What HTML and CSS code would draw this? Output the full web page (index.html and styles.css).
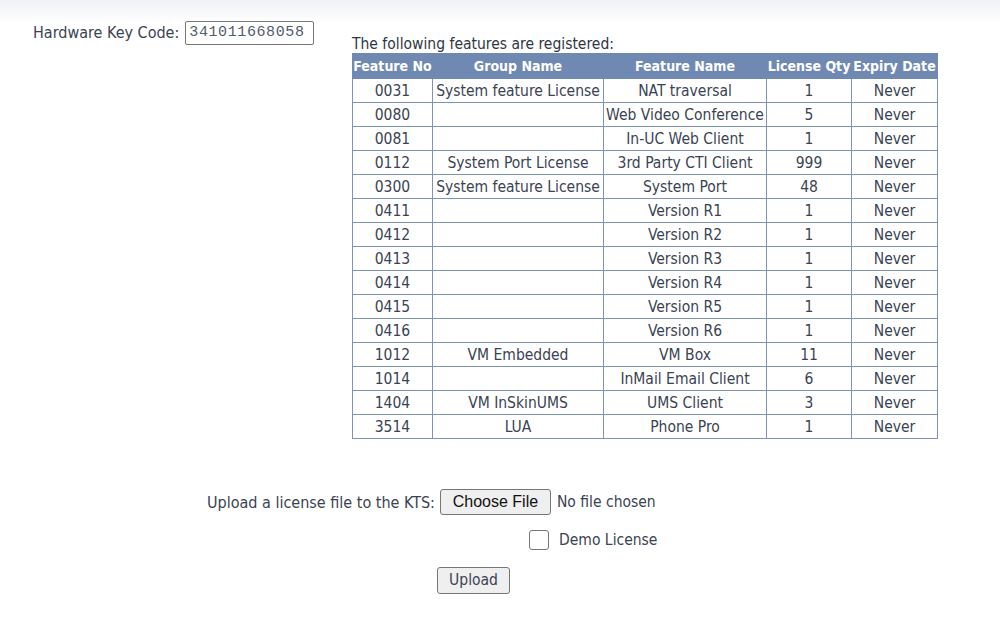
FILE: index.html
```html
<!DOCTYPE html>
<html>
<head>
<meta charset="utf-8">
<link rel="stylesheet" href="styles.css">
</head>
<body>
<div class="band"></div>
<div class="page">
  <div class="top">
    <div class="key">
      <span class="key-label">Hardware Key Code:</span>
      <span class="key-box">341011668058</span>
    </div>
    <div class="features">
      <div class="caption">The following features are registered:</div>
      <table class="ftable">
        <colgroup>
          <col class="c1"><col class="c2"><col class="c3"><col class="c4"><col class="c5">
        </colgroup>
        <thead>
          <tr><th>Feature No</th><th>Group Name</th><th>Feature Name</th><th>License Qty</th><th>Expiry Date</th></tr>
        </thead>
        <tbody>
          <tr><td>0031</td><td>System feature License</td><td>NAT traversal</td><td>1</td><td>Never</td></tr>
          <tr><td>0080</td><td></td><td>Web Video Conference</td><td>5</td><td>Never</td></tr>
          <tr><td>0081</td><td></td><td>In-UC Web Client</td><td>1</td><td>Never</td></tr>
          <tr><td>0112</td><td>System Port License</td><td>3rd Party CTI Client</td><td>999</td><td>Never</td></tr>
          <tr><td>0300</td><td>System feature License</td><td>System Port</td><td>48</td><td>Never</td></tr>
          <tr><td>0411</td><td></td><td>Version R1</td><td>1</td><td>Never</td></tr>
          <tr><td>0412</td><td></td><td>Version R2</td><td>1</td><td>Never</td></tr>
          <tr><td>0413</td><td></td><td>Version R3</td><td>1</td><td>Never</td></tr>
          <tr><td>0414</td><td></td><td>Version R4</td><td>1</td><td>Never</td></tr>
          <tr><td>0415</td><td></td><td>Version R5</td><td>1</td><td>Never</td></tr>
          <tr><td>0416</td><td></td><td>Version R6</td><td>1</td><td>Never</td></tr>
          <tr><td>1012</td><td>VM Embedded</td><td>VM Box</td><td>11</td><td>Never</td></tr>
          <tr><td>1014</td><td></td><td>InMail Email Client</td><td>6</td><td>Never</td></tr>
          <tr><td>1404</td><td>VM InSkinUMS</td><td>UMS Client</td><td>3</td><td>Never</td></tr>
          <tr><td>3514</td><td>LUA</td><td>Phone Pro</td><td>1</td><td>Never</td></tr>
        </tbody>
      </table>
    </div>
  </div>

  <div class="upload">
    <div class="up-row">
      <span class="up-label">Upload a license file to the KTS:</span>
      <span class="btn choose">Choose File</span>
      <span class="nofile">No file chosen</span>
    </div>
    <div class="demo-row">
      <span class="check"></span>
      <span class="demo-label">Demo License</span>
    </div>
    <div class="submit-row">
      <span class="btn upload-btn">Upload</span>
    </div>
  </div>
</div>
</body>
</html>
```

FILE: styles.css
```css
html, body {
  margin: 0;
  padding: 0;
  background: #ffffff;
}
body {
  font-family: "DejaVu Sans Condensed", "DejaVu Sans", sans-serif;
  font-size: 15.5px;
  color: #3a4353;
  width: 1000px;
  height: 638px;
  overflow: hidden;
  position: relative;
}
.band {
  position: absolute;
  left: 0;
  top: 0;
  width: 1000px;
  height: 22px;
  background: linear-gradient(#eef1f6, #ffffff);
}
.page {
  position: relative;
  padding-top: 21px;
}
.top {
  display: flex;
}
.key {
  width: 352px;
  box-sizing: border-box;
  padding-left: 33px;
  display: flex;
  align-items: flex-start;
  gap: 6px;
}
.key-label {
  line-height: 24px;
  font-size: 16px;
}
.key-box {
  font-family: "Liberation Mono", "DejaVu Sans Mono", monospace;
  font-size: 15px;
  letter-spacing: 0.6px;
  color: #535c6b;
  border: 1px solid #767676;
  border-radius: 2px;
  height: 22px;
  line-height: 22px;
  width: 121px;
  padding: 0 3px;
}
.features {
  padding-top: 15px;
}
.caption {
  line-height: 17px;
  color: #2e3644;
}
.ftable {
  border-collapse: collapse;
  width: 586px;
  table-layout: fixed;
  border: 1px solid #7e93b5;
}
.c1 { width: 80px; }
.c2 { width: 171px; }
.c3 { width: 163px; }
.c4 { width: 85px; }
.c5 { width: 86px; }
.ftable th {
  background: #7089b2;
  color: #ffffff;
  font-weight: bold;
  font-size: 14px;
  height: 24px;
  padding: 0;
  white-space: nowrap;
  border: 1px solid #7089b2;
  text-align: center;
}
.ftable td {
  border: 1px solid #7e93b5;
  height: 23px;
  padding: 0;
  text-align: center;
  white-space: nowrap;
}
.upload {
  margin-top: 50px;
}
.up-row {
  display: flex;
  align-items: center;
  padding-left: 207px;
  height: 26px;
  font-size: 16px;
}
.up-label {
  margin-right: 5px;
}
.btn {
  display: inline-block;
  box-sizing: border-box;
  border: 1px solid #767676;
  border-radius: 3px;
  background: #efefef;
  text-align: center;
}
.choose {
  font-family: "Liberation Sans", Arial, sans-serif;
  font-size: 16px;
  color: #111;
  width: 111px;
  height: 26px;
  line-height: 24px;
}
.nofile {
  margin-left: 6px;
  font-size: 15.5px;
}
.demo-row {
  display: flex;
  align-items: center;
  padding-left: 529px;
  margin-top: 14px;
  height: 22px;
}
.check {
  width: 18px;
  height: 18px;
  border: 1px solid #767676;
  border-radius: 3px;
  margin-right: 10px;
}
.submit-row {
  padding-left: 437px;
  margin-top: 16px;
}
.upload-btn {
  width: 73px;
  height: 27px;
  line-height: 25px;
  color: #3a4353;
}
```
